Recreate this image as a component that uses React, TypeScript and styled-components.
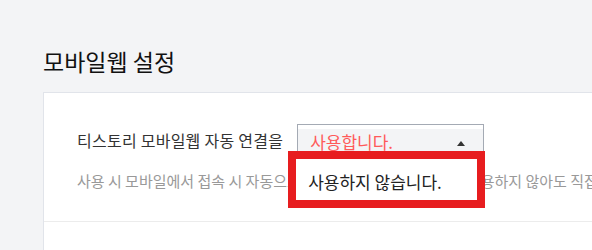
import React from "react";
import styled, { createGlobalStyle } from "styled-components";

const GlobalStyle = createGlobalStyle`
    html, body {
        margin: 0;
        padding: 0;
        background: #f3f4f6;
        overflow: hidden;
        font-family: "Noto Sans CJK KR", "Noto Sans", sans-serif;
    }
`;

const Page = styled.div`
    padding: 46px 0 0 43px;
    width: 700px;
`;

const Title = styled.h2`
    margin: 0 0 16px 0;
    font-size: 23px;
    font-weight: 400;
    line-height: 30px;
    color: #111;
`;

const Card = styled.section`
    background: #fff;
    border: 1px solid #e1e4ea;
    min-height: 200px;
`;

const Item = styled.div`
    padding: 31px 0 30px 33px;
    border-bottom: 1px solid #ececec;
`;

const Row = styled.div`
    display: flex;
    align-items: center;
    gap: 14px;
`;

const Label = styled.span`
    font-size: 16px;
    line-height: 20px;
    color: #333;
    white-space: nowrap;
    letter-spacing: 0.25px;
`;

const SelectWrap = styled.div`
    position: relative;
`;

const SelectBox = styled.div`
    box-sizing: border-box;
    width: 187px;
    height: 32px;
    border: 1px solid #a4aab4;
    background: linear-gradient(#fff 0 4px, #f3f4f6 4px);
    display: flex;
    align-items: center;
    justify-content: space-between;
    padding: 3px 18px 0 12px;
`;

const SelectValue = styled.span<{ $active?: boolean }>`
    font-size: 17px;
    line-height: 20px;
    color: ${(p) => (p.$active ? "#ff5a5a" : "#222")};
`;

const Caret = styled.span`
    width: 0;
    height: 0;
    border-left: 4px solid transparent;
    border-right: 4px solid transparent;
    border-bottom: 5px solid #333;
    margin-top: 4px;
`;

const Menu = styled.ul`
    position: absolute;
    top: 27px;
    left: -9px;
    box-sizing: border-box;
    width: 197px;
    height: 57px;
    margin: 0;
    padding: 4px 0 0 12px;
    list-style: none;
    background: #fff;
    border: 8px solid #e71d1f;
    display: flex;
    align-items: center;
`;

const MenuItem = styled.li`
    font-size: 17px;
    line-height: 20px;
    color: #222;
    white-space: nowrap;
`;

const Help = styled.p`
    margin: 15px 0 0;
    font-size: 15px;
    line-height: 20px;
    color: #999;
    white-space: nowrap;
`;

export default function App() {
    return (
        <>
            <GlobalStyle />
            <Page>
                <Title>모바일웹 설정</Title>
                <Card>
                    <Item>
                        <Row>
                            <Label>티스토리 모바일웹 자동 연결을</Label>
                            <SelectWrap>
                                <SelectBox>
                                    <SelectValue $active>사용합니다.</SelectValue>
                                    <Caret />
                                </SelectBox>
                                <Menu>
                                    <MenuItem>사용하지 않습니다.</MenuItem>
                                </Menu>
                            </SelectWrap>
                        </Row>
                        <Help>
                            사용 시 모바일에서 접속 시 자동으로 모바일웹으로 연결됩니다. 사용하지 않아도 직접 접속할 수 있습니다.
                        </Help>
                    </Item>
                </Card>
            </Page>
        </>
    );
}
